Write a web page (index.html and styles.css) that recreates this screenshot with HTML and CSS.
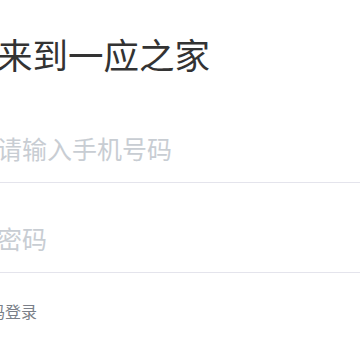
FILE: index.html
```html
<!DOCTYPE html>
<html lang="zh-CN">

<head>
    <meta charset="UTF-8">
    <meta name="viewport" content="width=device-width, initial-scale=1.0">
    <title>登录</title>
    <link rel="stylesheet" href="styles.css">
</head>

<body>
    <div class="login">
        <h1 class="title">来到一应之家</h1>

        <div class="field">
            <input type="tel" class="input" placeholder="请输入手机号码">
        </div>
        <div class="field">
            <input type="password" class="input" placeholder="密码">
        </div>

        <a class="switch" href="#">验证码登录</a>
    </div>
</body>

</html>
```

FILE: styles.css
```css
* {
    margin: 0;
    padding: 0;
    box-sizing: border-box;
    font-family: "Noto Sans CJK SC", "Noto Sans", sans-serif;
}

body {
    background: #fff;
    overflow: hidden;
}

/* login form */
.login {
    display: flex;
    flex-direction: column;
    margin-left: -3px;
    padding-top: 29px;
}

.title {
    font-size: 35.5px;
    font-weight: normal;
    line-height: 49px;
    color: #333;
}

.field {
    border-bottom: 1px solid #e4e4ec;
}

.field:first-of-type {
    margin-top: 38px;
}

.field + .field {
    margin-top: 23px;
}

.input {
    width: 100%;
    height: 66px;
    padding-bottom: 3px;
    border: none;
    outline: none;
    font-size: 25px;
    color: #333;
    background: transparent;
}

.input::placeholder {
    color: #c8cdd3;
}

.switch {
    margin-top: 27px;
    margin-left: -40px;
    font-size: 16px;
    line-height: 22px;
    color: #7a7f88;
    text-decoration: none;
}
```
